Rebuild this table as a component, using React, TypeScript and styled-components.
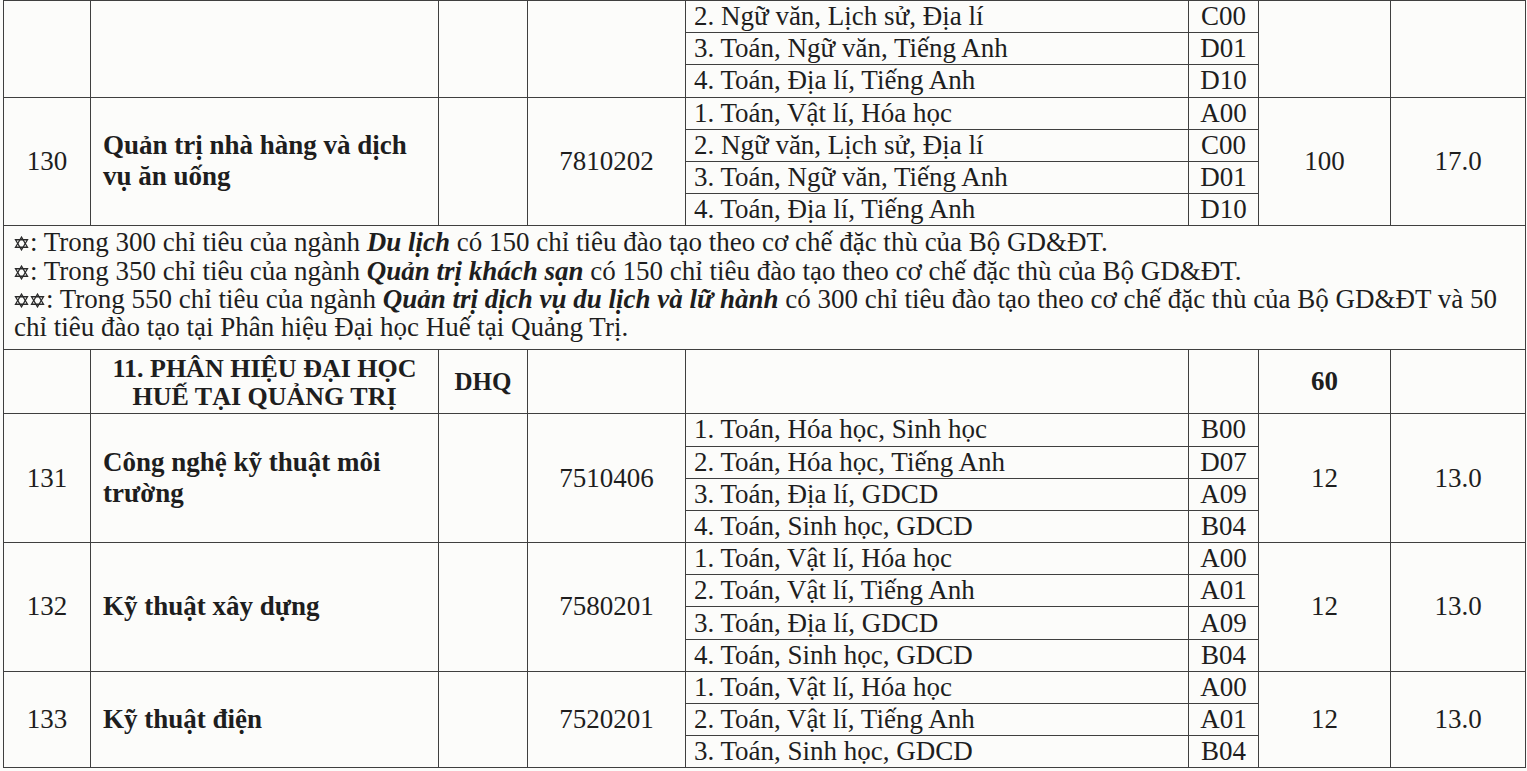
import React from "react";
import styled, { createGlobalStyle } from "styled-components";

interface Program {
  no?: string;
  name?: string[];
  school?: string;
  code?: string;
  subjects: [string, string][];
  quota?: string;
  score?: string;
}

const topPrograms: Program[] = [
  {
    subjects: [
      ["2. Ngữ văn, Lịch sử, Địa lí", "C00"],
      ["3. Toán, Ngữ văn, Tiếng Anh", "D01"],
      ["4. Toán, Địa lí, Tiếng Anh", "D10"],
    ],
  },
  {
    no: "130",
    name: ["Quản trị nhà hàng và dịch", "vụ ăn uống"],
    code: "7810202",
    subjects: [
      ["1. Toán, Vật lí, Hóa học", "A00"],
      ["2. Ngữ văn, Lịch sử, Địa lí", "C00"],
      ["3. Toán, Ngữ văn, Tiếng Anh", "D01"],
      ["4. Toán, Địa lí, Tiếng Anh", "D10"],
    ],
    quota: "100",
    score: "17.0",
  },
];

const bottomPrograms: Program[] = [
  {
    no: "131",
    name: ["Công nghệ kỹ thuật môi", "trường"],
    code: "7510406",
    subjects: [
      ["1. Toán, Hóa học, Sinh học", "B00"],
      ["2. Toán, Hóa học, Tiếng Anh", "D07"],
      ["3. Toán, Địa lí, GDCD", "A09"],
      ["4. Toán, Sinh học, GDCD", "B04"],
    ],
    quota: "12",
    score: "13.0",
  },
  {
    no: "132",
    name: ["Kỹ thuật xây dựng"],
    code: "7580201",
    subjects: [
      ["1. Toán, Vật lí, Hóa học", "A00"],
      ["2. Toán, Vật lí, Tiếng Anh", "A01"],
      ["3. Toán, Địa lí, GDCD", "A09"],
      ["4. Toán, Sinh học, GDCD", "B04"],
    ],
    quota: "12",
    score: "13.0",
  },
  {
    no: "133",
    name: ["Kỹ thuật điện"],
    code: "7520201",
    subjects: [
      ["1. Toán, Vật lí, Hóa học", "A00"],
      ["2. Toán, Vật lí, Tiếng Anh", "A01"],
      ["3. Toán, Sinh học, GDCD", "B04"],
    ],
    quota: "12",
    score: "13.0",
  },
];

// hollow six-pointed star used as footnote marker
const Star = () => (
  <StarIcon viewBox="0 0 20 20">
    <polygon points="10,1.5 18,15 2,15" />
    <polygon points="10,18.5 2,5 18,5" />
  </StarIcon>
);

const ProgramRows = ({ program }: { program: Program }) => {
  const span = program.subjects.length;
  return (
    <>
      {program.subjects.map(([subject, combo], i) => (
        <Row key={combo + i}>
          {i === 0 && (
            <>
              <Cell rowSpan={span} $align="center">
                {program.no}
              </Cell>
              <NameCell rowSpan={span}>
                {program.name?.map((line) => (
                  <div key={line}>{line}</div>
                ))}
              </NameCell>
              <Cell rowSpan={span} $align="center">
                {program.school}
              </Cell>
              <Cell rowSpan={span} $align="center">
                {program.code}
              </Cell>
            </>
          )}
          <SubjectCell>{subject}</SubjectCell>
          <Cell $align="center">{combo}</Cell>
          {i === 0 && (
            <>
              <Cell rowSpan={span} $align="center">
                {program.quota}
              </Cell>
              <Cell rowSpan={span} $align="center">
                {program.score}
              </Cell>
            </>
          )}
        </Row>
      ))}
    </>
  );
};

export default function App() {
  return (
    <>
      <GlobalStyle />
      <Sheet>
        <colgroup>
          <col style={{ width: 87 }} />
          <col style={{ width: 348 }} />
          <col style={{ width: 89 }} />
          <col style={{ width: 158 }} />
          <col style={{ width: 503 }} />
          <col style={{ width: 70 }} />
          <col style={{ width: 132 }} />
          <col style={{ width: 135 }} />
        </colgroup>
        <tbody>
          {topPrograms.map((p, i) => (
            <ProgramRows key={i} program={p} />
          ))}
          <Row $h={124}>
            <NotesCell colSpan={8}>
              <NoteLine>
                <Star />: Trong 300 chỉ tiêu của ngành <Em>Du lịch</Em> có 150
                chỉ tiêu đào tạo theo cơ chế đặc thù của Bộ GD&amp;ĐT.
              </NoteLine>
              <NoteLine>
                <Star />: Trong 350 chỉ tiêu của ngành{" "}
                <Em>Quản trị khách sạn</Em> có 150 chỉ tiêu đào tạo theo cơ chế
                đặc thù của Bộ GD&amp;ĐT.
              </NoteLine>
              <NoteLine>
                <Star />
                <Star />: Trong 550 chỉ tiêu của ngành{" "}
                <Em>Quản trị dịch vụ du lịch và lữ hành</Em> có 300 chỉ tiêu
                đào tạo theo cơ chế đặc thù của Bộ GD&amp;ĐT và 50
              </NoteLine>
              <NoteLine>
                chỉ tiêu đào tạo tại Phân hiệu Đại học Huế tại Quảng Trị.
              </NoteLine>
            </NotesCell>
          </Row>
          <Row $h={64}>
            <Cell />
            <TitleCell>
              <div>11. PHÂN HIỆU ĐẠI HỌC</div>
              <div>HUẾ TẠI QUẢNG TRỊ</div>
            </TitleCell>
            <SchoolCell>DHQ</SchoolCell>
            <Cell />
            <Cell />
            <Cell />
            <Cell $align="center" $bold>
              60
            </Cell>
            <Cell />
          </Row>
          {bottomPrograms.map((p, i) => (
            <ProgramRows key={i} program={p} />
          ))}
        </tbody>
      </Sheet>
    </>
  );
}

const GlobalStyle = createGlobalStyle`
  html, body {
    margin: 0;
    padding: 0;
    background: #fcfcfa;
  }
  body {
    font-family: "Liberation Serif", "Times New Roman", serif;
    color: #1e1e1e;
  }
`;

const Sheet = styled.table`
  margin-left: 3px;
  width: 1522px;
  table-layout: fixed;
  border-collapse: collapse;
  font-size: 27px;
`;

const Row = styled.tr<{ $h?: number }>`
  height: ${({ $h }) => $h ?? 32.2}px;
`;

const Cell = styled.td<{ $align?: "left" | "center"; $bold?: boolean }>`
  border: 1px solid #3f3f3f;
  padding: 0;
  text-align: ${({ $align }) => $align ?? "left"};
  vertical-align: middle;
  font-weight: ${({ $bold }) => ($bold ? 700 : 400)};
  line-height: 29px;
  white-space: nowrap;
`;

const NameCell = styled(Cell)`
  padding: 0 12px;
  font-weight: 700;
  line-height: 31px;
`;

const SubjectCell = styled(Cell)`
  padding-left: 8px;
`;

const SchoolCell = styled(Cell)`
  text-align: center;
  font-weight: 700;
  font-size: 25px;
`;

const TitleCell = styled(Cell)`
  text-align: center;
  font-weight: 700;
  font-size: 26px;
  line-height: 28px;
  padding-top: 2px;
`;

const NotesCell = styled.td`
  border: 1px solid #3f3f3f;
  padding: 2px 0 2px 10px;
  vertical-align: top;
`;

const NoteLine = styled.div`
  line-height: 28.3px;
  white-space: nowrap;
`;

const Em = styled.em`
  font-weight: 700;
  font-style: italic;
`;

const StarIcon = styled.svg`
  width: 15px;
  height: 15px;
  margin-right: 1px;
  vertical-align: 0px;
  fill: none;
  stroke: #2a2a2a;
  stroke-width: 1.7;
  stroke-linejoin: miter;
`;
